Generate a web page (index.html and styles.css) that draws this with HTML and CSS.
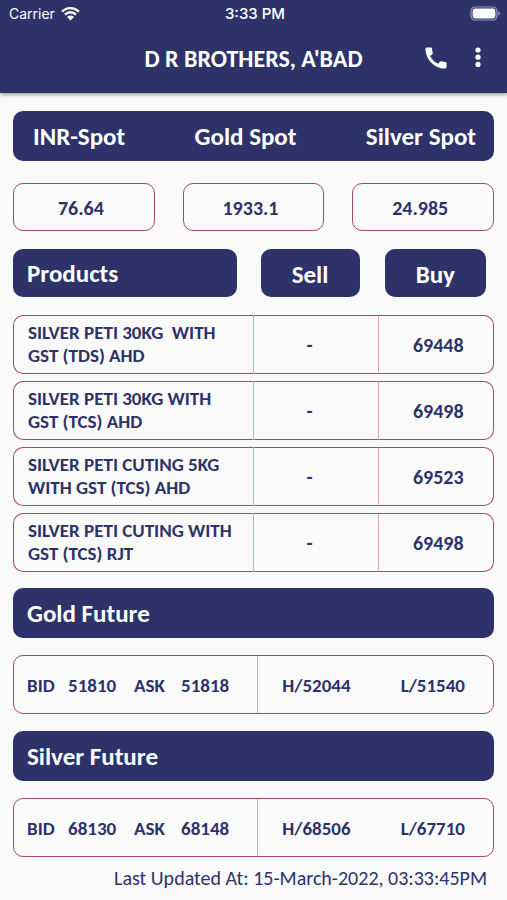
FILE: index.html
```html
<!DOCTYPE html>
<html lang="en">
<head>
    <meta charset="UTF-8">
    <meta name="viewport" content="width=device-width, initial-scale=1.0">
    <title>D R BROTHERS, A'BAD</title>
    <link rel="stylesheet" href="styles.css">
</head>
<body>

    <header class="top">
        <div class="status">
            <div class="carrier">
                <span>Carrier</span>
                <svg width="19" height="15" viewBox="0 0 18 14" aria-hidden="true">
                    <path d="M1 5.2a11.4 11.4 0 0 1 16 0M3.8 8a7.4 7.4 0 0 1 10.4 0" fill="none" stroke="#fff" stroke-width="2.3"/>
                    <path d="M9 13.6 5.7 10.3a4.7 4.7 0 0 1 6.6 0z" fill="#fff"/>
                </svg>
            </div>
            <span class="time">3:33 PM</span>
            <svg class="battery" width="31" height="15" viewBox="0 0 31 15" aria-hidden="true">
                <rect x="1" y="1" width="26" height="13" rx="4" fill="none" stroke="#9a9dbd" stroke-width="1.2"/>
                <rect x="2.6" y="2.6" width="22.8" height="9.8" rx="2.4" fill="#fff"/>
                <path d="M28.4 5.2c2 .8 2 3.8 0 4.6z" fill="#9a9dbd"/>
            </svg>
        </div>
        <div class="appbar">
            <h1>D R BROTHERS, A'BAD</h1>
            <div class="actions">
                <button type="button" aria-label="Call">
                    <svg width="28" height="28" viewBox="0 0 24 24"><path fill="#fff" d="M20.01 15.38c-1.23 0-2.42-.2-3.53-.56a.977.977 0 0 0-1.01.24l-1.57 1.97c-2.83-1.35-5.48-3.9-6.89-6.83l1.95-1.66c.27-.28.35-.67.24-1.02-.37-1.11-.56-2.3-.56-3.53 0-.54-.45-.99-.99-.99H4.19C3.65 3 3 3.24 3 3.99 3 13.28 10.73 21 20.01 21c.71 0 .99-.63.99-1.18v-3.45c0-.54-.45-.99-.99-.99z"/></svg>
                </button>
                <button type="button" aria-label="Menu">
                    <svg width="28" height="28" viewBox="0 0 28 28"><g fill="#fff"><circle cx="14" cy="6" r="2.6"/><circle cx="14" cy="13.2" r="2.6"/><circle cx="14" cy="20.4" r="2.6"/></g></svg>
                </button>
            </div>
        </div>
    </header>

    <main>
        <div class="bar spot-names">
            <span>INR-Spot</span>
            <span>Gold Spot</span>
            <span>Silver Spot</span>
        </div>
        <div class="spot-values">
            <div class="box">76.64</div>
            <div class="box">1933.1</div>
            <div class="box">24.985</div>
        </div>

        <table class="products">
            <thead>
                <tr>
                    <th class="name"><span class="bar">Products</span></th>
                    <th class="sell"><span class="bar">Sell</span></th>
                    <th class="buy"><span class="bar">Buy</span></th>
                </tr>
            </thead>
            <tbody>
                <tr>
                    <td class="item">SILVER PETI 30KG&nbsp; WITH GST (TDS) AHD</td>
                    <td class="sell">-</td>
                    <td class="buy">69448</td>
                </tr>
                <tr>
                    <td class="item">SILVER PETI 30KG WITH GST (TCS) AHD</td>
                    <td class="sell">-</td>
                    <td class="buy">69498</td>
                </tr>
                <tr>
                    <td class="item">SILVER PETI CUTING 5KG WITH GST (TCS) AHD</td>
                    <td class="sell">-</td>
                    <td class="buy">69523</td>
                </tr>
                <tr>
                    <td class="item">SILVER PETI CUTING WITH GST (TCS) RJT</td>
                    <td class="sell">-</td>
                    <td class="buy">69498</td>
                </tr>
            </tbody>
        </table>

        <section class="future">
            <h2 class="bar">Gold Future</h2>
            <div class="quote">
                <div class="bid-ask">
                    <span>BID</span><span>51810</span>
                    <span>ASK</span><span>51818</span>
                </div>
                <div class="high-low">
                    <span>H/52044</span>
                    <span>L/51540</span>
                </div>
            </div>
        </section>

        <section class="future">
            <h2 class="bar">Silver Future</h2>
            <div class="quote">
                <div class="bid-ask">
                    <span>BID</span><span>68130</span>
                    <span>ASK</span><span>68148</span>
                </div>
                <div class="high-low">
                    <span>H/68506</span>
                    <span>L/67710</span>
                </div>
            </div>
        </section>

        <p class="updated">Last Updated At: 15-March-2022, 03:33:45PM</p>
    </main>

</body>
</html>
```
FILE: styles.css
```css
* {
    box-sizing: border-box;
}

body {
    margin: 0;
    background-color: #fafafb;
    color: #2d3369;
    font-family: Carlito, Lato, sans-serif;
    font-size: 20px;
    font-weight: bold;
}

/* Header */
.top {
    background-color: #2d3369;
    color: #fff;
    box-shadow: 0 1px 4px rgba(0, 0, 0, 0.5);
}

.status {
    display: grid;
    grid-template-columns: 1fr auto 1fr;
    align-items: center;
    height: 27px;
    padding: 0 6px 0 9px;
    font-family: Inter, sans-serif;
    font-size: 14px;
    font-weight: normal;
}

.carrier {
    display: flex;
    align-items: center;
    gap: 6px;
}

.time {
    font-size: 15px;
    font-weight: 500;
}

.battery {
    justify-self: end;
}

.appbar {
    display: grid;
    grid-template-columns: 1fr auto 1fr;
    align-items: center;
    height: 66px;
    padding: 0 15px 4px;
}

h1 {
    grid-column: 2;
    margin: 0;
    font-size: 24px;
}

.actions {
    display: flex;
    justify-content: flex-end;
    gap: 14px;
}

.actions button {
    display: flex;
    padding: 0;
    border: none;
    background: none;
    cursor: pointer;
}

/* Content */
main {
    padding: 18px 13px 0;
}

.bar {
    display: flex;
    align-items: center;
    height: 50px;
    margin: 0;
    padding: 0 14px;
    border-radius: 10px;
    background-color: #2d3369;
    color: #fff;
    font-size: 25px;
    font-weight: bold;
}

.spot-names {
    justify-content: space-between;
    padding: 0 18px 0 20px;
}

.spot-values {
    display: grid;
    grid-template-columns: repeat(3, 1fr);
    gap: 28px;
    margin-top: 22px;
}

.box {
    display: flex;
    align-items: center;
    justify-content: center;
    height: 48px;
    padding: 2px 6px 0 0;
    border: 1px solid #a54a64;
    border-radius: 10px;
}

/* Products */
.products {
    width: 100%;
    margin-top: 11px;
    border-collapse: separate;
    border-spacing: 0 7px;
    table-layout: fixed;
}

.products th {
    padding: 0 0 11px;
}

.products th.name {
    width: 50%;
    padding-right: 17px;
}

.products th.sell {
    padding-left: 7px;
    padding-right: 19px;
}

.products th.buy {
    width: 24%;
    padding-left: 6px;
    padding-right: 8px;
}

.products th .bar {
    height: 48px;
}

.products .sell .bar,
.products .buy .bar {
    justify-content: center;
    padding: 2px 0 0;
}

.products td {
    height: 59px;
    padding: 2px 0 0;
    border: 1px solid #a54a64;
    border-left-width: 0;
    border-right-color: #d3adb9;
    line-height: 23px;
    text-align: center;
}

.products td.item {
    padding: 0 14px 2px;
    border-left-width: 1px;
    border-radius: 10px 0 0 10px;
    font-size: 19px;
    text-align: left;
}

.products td.sell {
    padding-right: 12px;
}

.products td.buy {
    padding-left: 5px;
    border-right-color: #a54a64;
    border-radius: 0 10px 10px 0;
}

/* Futures */
.future {
    margin-bottom: 17px;
}

.products + .future {
    margin-top: 9px;
}

.quote {
    display: flex;
    height: 59px;
    margin-top: 17px;
    border: 1px solid #a54a64;
    border-radius: 10px;
    font-size: 19px;
}

.bid-ask {
    display: grid;
    grid-template-columns: 41px 66px 47px auto;
    align-content: center;
    width: 51%;
    padding: 2px 0 0 13px;
    border-right: 1px solid #d3adb9;
}

.high-low {
    display: flex;
    flex: 1;
    align-items: center;
    justify-content: space-between;
    padding: 2px 28px 0 24px;
}

.updated {
    margin: -8px 0 0;
    padding-right: 7px;
    font-weight: normal;
    line-height: 24px;
    text-align: right;
}
```
